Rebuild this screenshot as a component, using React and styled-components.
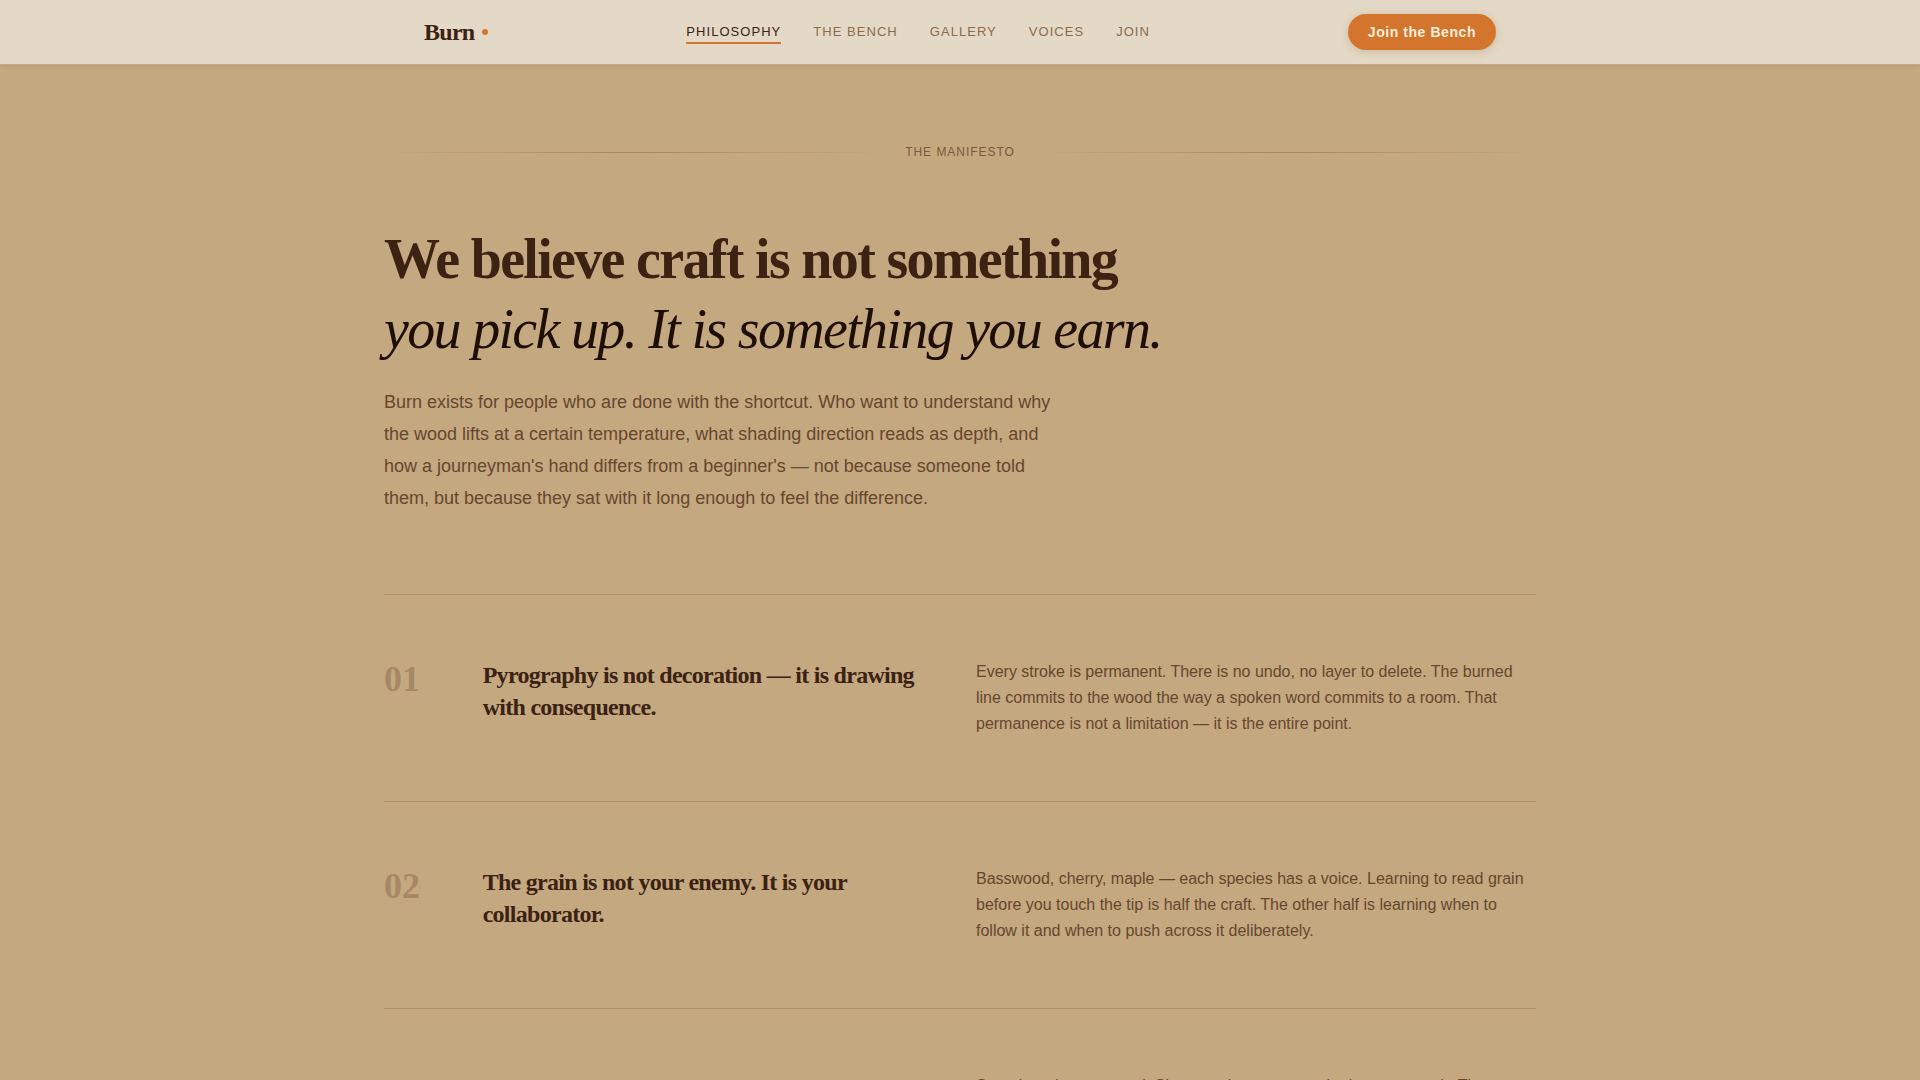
import React from "react";
import styled, { createGlobalStyle } from "styled-components";

const GlobalStyle = createGlobalStyle`
  *, *::before, *::after {
    box-sizing: border-box;
  }

  html {
    overflow-x: hidden;
    scrollbar-width: none;
  }

  body {
    margin: 0;
    background: #c4a880;
    color: #3b2212;
    font-family: "Liberation Sans", Arial, sans-serif;
  }
`;

const Header = styled.header`
  position: sticky;
  top: 0;
  z-index: 10;
  background: #e4d9c6;
  box-shadow: 0 1px 0 #c0ac8a, 0 2px 4px rgba(59, 32, 16, 0.1);
`;

const HeaderInner = styled.div`
  display: flex;
  align-items: center;
  justify-content: space-between;
  max-width: 1152px;
  height: 64px;
  margin: 0 auto;
  padding: 0 40px;
`;

const Logo = styled.a`
  display: flex;
  align-items: center;
  gap: 8px;
  color: #3b2212;
  font-family: "Liberation Serif", "Times New Roman", serif;
  font-size: 24px;
  font-weight: 700;
  letter-spacing: -0.03em;
  text-decoration: none;

  &::after {
    content: "";
    width: 6px;
    height: 6px;
    border-radius: 50%;
    background: #d4752e;
  }
`;

const Nav = styled.nav`
  display: flex;
  gap: 32px;
`;

const NavItem = styled.a`
  padding: 4px 0 2px;
  border-bottom: 2px solid ${({ $active }) => ($active ? "#d4752e" : "transparent")};
  color: ${({ $active }) => ($active ? "#3b2212" : "#8b6b4a")};
  font-size: 13px;
  line-height: 16px;
  letter-spacing: 0.08em;
  text-decoration: none;
  text-transform: uppercase;
`;

const JoinButton = styled.button`
  height: 36px;
  padding: 0 20px;
  border: none;
  border-radius: 18px;
  background: #d4752e;
  box-shadow: 0 2px 8px rgba(140, 90, 40, 0.25);
  color: #fbeedb;
  font-family: inherit;
  font-size: 14px;
  font-weight: 700;
  letter-spacing: 0.04em;
  cursor: pointer;
`;

const Manifesto = styled.main`
  max-width: 1152px;
  margin: 0 auto;
  padding: 80px 0;
`;

const Divider = styled.div`
  display: flex;
  align-items: center;
  gap: 24px;
  margin-bottom: 64px;
  color: #7b593f;
  font-size: 12px;
  line-height: 16px;
  letter-spacing: 0.08em;
  text-transform: uppercase;

  &::before,
  &::after {
    content: "";
    flex: 1;
    height: 1px;
    background: linear-gradient(to right, transparent, #a58661, transparent);
  }
`;

const Title = styled.h1`
  margin: 0 0 22px;
  font-family: "Liberation Serif", "Times New Roman", serif;
  font-size: 56px;
  font-weight: 700;
  line-height: 70px;
  letter-spacing: -0.03em;

  em {
    display: block;
    color: #1e0e06;
    font-weight: 400;
  }
`;

const Lead = styled.p`
  max-width: 680px;
  margin: 0 0 80px;
  color: #66472e;
  font-size: 18px;
  line-height: 32px;
`;

const Principles = styled.ol`
  margin: 0;
  padding: 0;
  list-style: none;
`;

const Principle = styled.li`
  display: grid;
  grid-template-columns: repeat(12, 1fr);
  gap: 32px;
  padding: 64px 0;
  border-top: 1px solid #ae916a;
`;

const Number = styled.span`
  color: #a68866;
  font-family: "Liberation Serif", "Times New Roman", serif;
  font-size: 36px;
  font-weight: 700;
  line-height: 40px;
`;

const PrincipleTitle = styled.h2`
  grid-column: span 5;
  margin: 0;
  font-family: "Liberation Serif", "Times New Roman", serif;
  font-size: 24px;
  font-weight: 700;
  line-height: 32px;
  letter-spacing: -0.03em;
`;

const PrincipleText = styled.p`
  grid-column: span 6;
  margin: 0;
  color: #66472e;
  font-size: 16px;
  line-height: 26px;
`;

const links = [
  { href: "#philosophy", label: "Philosophy" },
  { href: "#bench", label: "The Bench" },
  { href: "#gallery", label: "Gallery" },
  { href: "#voices", label: "Voices" },
  { href: "#join", label: "Join" },
];

const principles = [
  {
    number: "01",
    title: "Pyrography is not decoration — it is drawing with consequence.",
    text: "Every stroke is permanent. There is no undo, no layer to delete. The burned line commits to the wood the way a spoken word commits to a room. That permanence is not a limitation — it is the entire point.",
  },
  {
    number: "02",
    title: "The grain is not your enemy. It is your collaborator.",
    text: "Basswood, cherry, maple — each species has a voice. Learning to read grain before you touch the tip is half the craft. The other half is learning when to follow it and when to push across it deliberately.",
  },
  {
    number: "03",
    title: "Slow is the only speed that works.",
    text: "Speed produces an end. Slowness is an answer the iron can teach. The practised hand waits for the tip and nothing else.",
  },
];

const App = () => {
  return (
    <>
      <GlobalStyle />
      <Header>
        <HeaderInner>
          <Logo href="#top">Burn</Logo>
          <Nav>
            {links.map(({ href, label }, i) => (
              <NavItem key={href} href={href} $active={i === 0}>
                {label}
              </NavItem>
            ))}
          </Nav>
          <JoinButton type="button">Join the Bench</JoinButton>
        </HeaderInner>
      </Header>
      <Manifesto id="philosophy">
        <Divider>The Manifesto</Divider>
        <Title>
          We believe craft is not something <em>you pick up. It is something you earn.</em>
        </Title>
        <Lead>
          Burn exists for people who are done with the shortcut. Who want to understand why the wood
          lifts at a certain temperature, what shading direction reads as depth, and how a
          journeyman's hand differs from a beginner's — not because someone told them, but because
          they sat with it long enough to feel the difference.
        </Lead>
        <Principles>
          {principles.map(({ number, title, text }) => (
            <Principle key={number}>
              <Number>{number}</Number>
              <PrincipleTitle>{title}</PrincipleTitle>
              <PrincipleText>{text}</PrincipleText>
            </Principle>
          ))}
        </Principles>
      </Manifesto>
    </>
  );
};

export default App;
